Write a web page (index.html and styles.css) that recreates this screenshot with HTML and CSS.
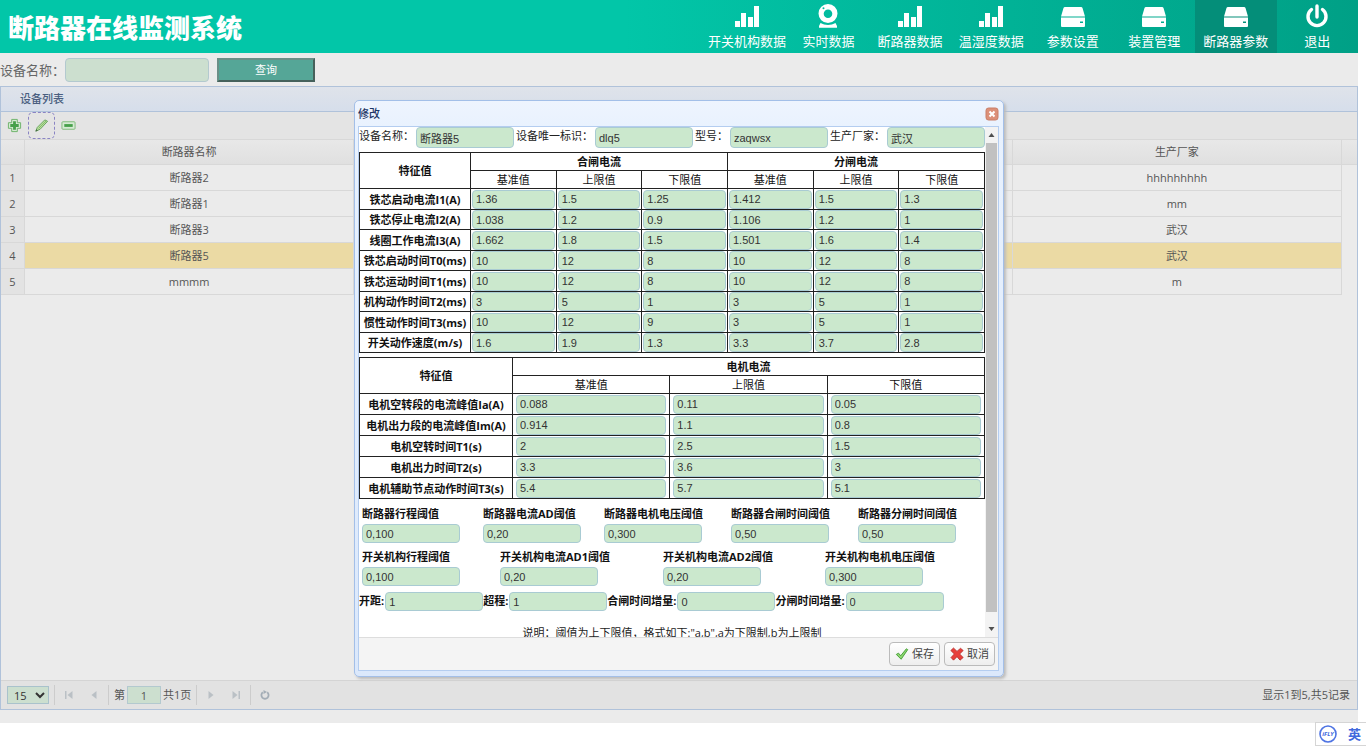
FILE: index.html
```html
<!DOCTYPE html>
<html lang="zh-CN">
<head>
<meta charset="utf-8">
<title>断路器在线监测系统</title>
<link rel="stylesheet" href="styles.css">
</head>
<body>
<svg class="defs" aria-hidden="true">
  <symbol id="bars" viewBox="0 0 26 24"><path d="M1 17h5v6H1zM7 9h5v14H7zM14 13h5v10h-5zM20 2h5v21h-5z"/></symbol>
  <symbol id="cam" viewBox="0 0 26 24"><path fill-rule="evenodd" d="M13 0a9.500 9.500 0 0 1 9.500 9.500 9.500 9.500 0 0 1-19 0A9.500 9.500 0 0 1 13 0zM13 5.500a4.300 4.300 0 1 0 0 8.600A4.300 4.300 0 0 0 13 5.500zM8.500 3.200a1 1 0 1 0 0 2 1 1 0 0 0 0-2zM5.500 19c4.500 2.500 10.500 2.500 15 0l1.500 3v1.800H4V22z"/></symbol>
  <symbol id="disk" viewBox="0 0 26 24"><path fill-rule="evenodd" d="M5 3h16q1.200 0 1.500 1L25 12.500H1L3.500 4Q3.800 3 5 3zM1 13.500h24V22q0 1-1 1H2q-1 0-1-1zM20 17.500V19h3v-1.500z"/></symbol>
  <symbol id="power" viewBox="0 0 26 24"><path d="M7.500 5.500a9 9 0 1 0 11 0M13 2v11" fill="none" stroke="currentColor" stroke-width="3.400" stroke-linecap="round"/></symbol>
</svg>

<div class="app">
  <header class="top">
    <h1>断路器在线监测系统</h1>
    <nav class="nav">
      <a href="#"><svg><use href="#bars"/></svg>开关机构数据</a>
      <a href="#"><svg><use href="#cam"/></svg>实时数据</a>
      <a href="#"><svg><use href="#bars"/></svg>断路器数据</a>
      <a href="#"><svg><use href="#bars"/></svg>温湿度数据</a>
      <a href="#"><svg><use href="#disk"/></svg>参数设置</a>
      <a href="#"><svg><use href="#disk"/></svg>装置管理</a>
      <a href="#" class="on"><svg><use href="#disk"/></svg>断路器参数</a>
      <a href="#"><svg><use href="#power"/></svg>退出</a>
    </nav>
  </header>

  <form class="search">
    <label for="q">设备名称：</label>
    <input id="q" type="text">
    <button type="button">查询</button>
  </form>

  <section class="panel">
    <h2>设备列表</h2>
    <div class="tools">
      <button type="button" aria-label="添加"><svg viewBox="0 0 16 16"><path d="M5 1.500h6V5h3.500v6H11v3.500H5V11H1.500V5H5z" fill="#d5ead3" stroke="#6bb167" stroke-linejoin="round"/><path d="M6.500 3.500h3v3h3v3h-3v3h-3v-3h-3v-3h3z" fill="#46a04a"/></svg></button>
      <button type="button" aria-label="修改" class="focus"><svg viewBox="0 0 16 16"><path d="M2 14l1.500-4L11.500 2 14.500 3.500 6.500 12z" fill="#b9dc9c" stroke="#62a35a" stroke-linejoin="round"/><path d="M5 11l8-8" stroke="#7dbb69"/><path d="M1.500 14.500l1-2.500 1.700 1.500z" fill="#486b44"/></svg></button>
      <button type="button" aria-label="删除"><svg viewBox="0 0 16 16"><rect x="1" y="4" width="14" height="8" rx="1" fill="#d5ead3" stroke="#7dba79"/><path d="M3.500 6.500h9v3h-9z" fill="#46a04a"/></svg></button>
    </div>
    <div class="gridwrap">
      <table class="grid">
        <colgroup><col class="no"><col><col><col><col><col class="gap"></colgroup>
        <thead><tr><th></th><th>断路器名称</th><th></th><th></th><th>生产厂家</th><th></th></tr></thead>
        <tbody>
          <tr><td>1</td><td>断路器2</td><td></td><td></td><td>hhhhhhhhh</td><td></td></tr>
          <tr><td>2</td><td>断路器1</td><td></td><td></td><td>mm</td><td></td></tr>
          <tr><td>3</td><td>断路器3</td><td></td><td></td><td>武汉</td><td></td></tr>
          <tr class="sel"><td>4</td><td>断路器5</td><td></td><td></td><td>武汉</td><td></td></tr>
          <tr><td>5</td><td>mmmm</td><td></td><td></td><td>m</td><td></td></tr>
        </tbody>
      </table>
    </div>
    <div class="pager">
      <select aria-label="每页条数"><option>15</option></select>
      <i></i>
      <button type="button" aria-label="首页"><svg viewBox="0 0 12 12"><path d="M2 2h1.500v8H2zM9.500 2v8L4.500 6z"/></svg></button>
      <button type="button" aria-label="上一页"><svg viewBox="0 0 12 12"><path d="M8.500 2v8L3.500 6z"/></svg></button>
      <i></i>
      <label for="pg">第</label><input id="pg" type="text" value="1"><span>共1页</span>
      <i></i>
      <button type="button" aria-label="下一页"><svg viewBox="0 0 12 12"><path d="M3.500 2v8l5-4z"/></svg></button>
      <button type="button" aria-label="末页"><svg viewBox="0 0 12 12"><path d="M2.500 2v8l5-4zM8.500 2H10v8H8.500z"/></svg></button>
      <i></i>
      <button type="button" aria-label="刷新"><svg viewBox="0 0 12 12"><path d="M3.800 3.300a3.600 3.600 0 1 0 4.400 0" fill="none" stroke="#a3adb6" stroke-width="1.800"/><path d="M4.500 1L8 3 4.500 5z" fill="#a3adb6"/></svg></button>
      <span class="info">显示1到5,共5记录</span>
    </div>
  </section>

  <div class="dialog" role="dialog" aria-labelledby="dt">
    <div class="dhead">
      <h2 id="dt">修改</h2>
      <button type="button" aria-label="关闭"><svg viewBox="0 0 14 14"><rect x="1" y="1" width="12" height="12" rx="2.500" fill="#dc9079" stroke="#c97f69"/><path d="M4.500 4.500l5 5m0-5l-5 5" stroke="#fff" stroke-width="2"/></svg></button>
    </div>
    <div class="dmain">
      <div class="dscroll">
        <div class="dbody">
          <div class="base">
            <label for="b1">设备名称：</label><input id="b1" value="断路器5">
            <label for="b2">设备唯一标识：</label><input id="b2" value="dlq5">
            <label for="b3">型号：</label><input id="b3" value="zaqwsx">
            <label for="b4">生产厂家：</label><input id="b4" value="武汉">
          </div>

          <table class="vals six">
            <colgroup><col class="name"><col><col><col><col><col><col></colgroup>
            <thead>
              <tr><th rowspan="2">特征值</th><th colspan="3">合闸电流</th><th colspan="3">分闸电流</th></tr>
              <tr><td>基准值</td><td>上限值</td><td>下限值</td><td>基准值</td><td>上限值</td><td>下限值</td></tr>
            </thead>
            <tbody>
              <tr><th>铁芯启动电流I1(A)</th><td><input aria-label="I1合闸基准值" value="1.36"></td><td><input aria-label="I1合闸上限值" value="1.5"></td><td><input aria-label="I1合闸下限值" value="1.25"></td><td><input aria-label="I1分闸基准值" value="1.412"></td><td><input aria-label="I1分闸上限值" value="1.5"></td><td><input aria-label="I1分闸下限值" value="1.3"></td></tr>
              <tr><th>铁芯停止电流I2(A)</th><td><input aria-label="I2合闸基准值" value="1.038"></td><td><input aria-label="I2合闸上限值" value="1.2"></td><td><input aria-label="I2合闸下限值" value="0.9"></td><td><input aria-label="I2分闸基准值" value="1.106"></td><td><input aria-label="I2分闸上限值" value="1.2"></td><td><input aria-label="I2分闸下限值" value="1"></td></tr>
              <tr><th>线圈工作电流I3(A)</th><td><input aria-label="I3合闸基准值" value="1.662"></td><td><input aria-label="I3合闸上限值" value="1.8"></td><td><input aria-label="I3合闸下限值" value="1.5"></td><td><input aria-label="I3分闸基准值" value="1.501"></td><td><input aria-label="I3分闸上限值" value="1.6"></td><td><input aria-label="I3分闸下限值" value="1.4"></td></tr>
              <tr><th>铁芯启动时间T0(ms)</th><td><input aria-label="T0合闸基准值" value="10"></td><td><input aria-label="T0合闸上限值" value="12"></td><td><input aria-label="T0合闸下限值" value="8"></td><td><input aria-label="T0分闸基准值" value="10"></td><td><input aria-label="T0分闸上限值" value="12"></td><td><input aria-label="T0分闸下限值" value="8"></td></tr>
              <tr><th>铁芯运动时间T1(ms)</th><td><input aria-label="T1合闸基准值" value="10"></td><td><input aria-label="T1合闸上限值" value="12"></td><td><input aria-label="T1合闸下限值" value="8"></td><td><input aria-label="T1分闸基准值" value="10"></td><td><input aria-label="T1分闸上限值" value="12"></td><td><input aria-label="T1分闸下限值" value="8"></td></tr>
              <tr><th>机构动作时间T2(ms)</th><td><input aria-label="T2合闸基准值" value="3"></td><td><input aria-label="T2合闸上限值" value="5"></td><td><input aria-label="T2合闸下限值" value="1"></td><td><input aria-label="T2分闸基准值" value="3"></td><td><input aria-label="T2分闸上限值" value="5"></td><td><input aria-label="T2分闸下限值" value="1"></td></tr>
              <tr><th>惯性动作时间T3(ms)</th><td><input aria-label="T3合闸基准值" value="10"></td><td><input aria-label="T3合闸上限值" value="12"></td><td><input aria-label="T3合闸下限值" value="9"></td><td><input aria-label="T3分闸基准值" value="3"></td><td><input aria-label="T3分闸上限值" value="5"></td><td><input aria-label="T3分闸下限值" value="1"></td></tr>
              <tr><th>开关动作速度(m/s)</th><td><input aria-label="速度合闸基准值" value="1.6"></td><td><input aria-label="速度合闸上限值" value="1.9"></td><td><input aria-label="速度合闸下限值" value="1.3"></td><td><input aria-label="速度分闸基准值" value="3.3"></td><td><input aria-label="速度分闸上限值" value="3.7"></td><td><input aria-label="速度分闸下限值" value="2.8"></td></tr>
            </tbody>
          </table>

          <table class="vals three">
            <colgroup><col class="name"><col><col><col></colgroup>
            <thead>
              <tr><th rowspan="2">特征值</th><th colspan="3">电机电流</th></tr>
              <tr><td>基准值</td><td>上限值</td><td>下限值</td></tr>
            </thead>
            <tbody>
              <tr><th>电机空转段的电流峰值Ia(A)</th><td><input aria-label="Ia基准值" value="0.088"></td><td><input aria-label="Ia上限值" value="0.11"></td><td><input aria-label="Ia下限值" value="0.05"></td></tr>
              <tr><th>电机出力段的电流峰值Im(A)</th><td><input aria-label="Im基准值" value="0.914"></td><td><input aria-label="Im上限值" value="1.1"></td><td><input aria-label="Im下限值" value="0.8"></td></tr>
              <tr><th>电机空转时间T1(s)</th><td><input aria-label="电机T1基准值" value="2"></td><td><input aria-label="电机T1上限值" value="2.5"></td><td><input aria-label="电机T1下限值" value="1.5"></td></tr>
              <tr><th>电机出力时间T2(s)</th><td><input aria-label="电机T2基准值" value="3.3"></td><td><input aria-label="电机T2上限值" value="3.6"></td><td><input aria-label="电机T2下限值" value="3"></td></tr>
              <tr><th>电机辅助节点动作时间T3(s)</th><td><input aria-label="电机T3基准值" value="5.4"></td><td><input aria-label="电机T3上限值" value="5.7"></td><td><input aria-label="电机T3下限值" value="5.1"></td></tr>
            </tbody>
          </table>

          <div class="limits five">
            <label>断路器行程阈值<input value="0,100"></label>
            <label>断路器电流AD阈值<input value="0,20"></label>
            <label>断路器电机电压阈值<input value="0,300"></label>
            <label>断路器合闸时间阈值<input value="0,50"></label>
            <label>断路器分闸时间阈值<input value="0,50"></label>
          </div>
          <div class="limits four">
            <label>开关机构行程阈值<input value="0,100"></label>
            <label>开关机构电流AD1阈值<input value="0,20"></label>
            <label>开关机构电流AD2阈值<input value="0,20"></label>
            <label>开关机构电机电压阈值<input value="0,300"></label>
          </div>
          <div class="extra">
            <label for="e1">开距:</label><input id="e1" value="1">
            <label for="e2">超程:</label><input id="e2" value="1">
            <label for="e3">合闸时间增量:</label><input id="e3" value="0">
            <label for="e4">分闸时间增量:</label><input id="e4" value="0">
          </div>
          <p class="note">说明：阈值为上下限值，格式如下:"a,b",a为下限制,b为上限制</p>
        </div>
        <div class="bar" aria-hidden="true">
          <svg viewBox="0 0 13 16"><path d="M3.500 10h6l-3-4z"/></svg>
          <div class="thumb"></div>
          <svg viewBox="0 0 13 16"><path d="M3.500 6h6l-3 4z"/></svg>
        </div>
      </div>
      <div class="dfoot">
        <button type="button"><svg viewBox="0 0 16 16"><path d="M1.500 8.500L4 7l2.500 3L13 2l1.500 1L7 14z" fill="#8fd673" stroke="#3a9a2c" stroke-linejoin="round"/></svg>保存</button>
        <button type="button"><svg viewBox="0 0 16 16"><path d="M1 4l3-2.800L8 5l4-3.500L15 4l-4 4 4 4-3.500 3L8 11l-4 4-2.800-3L5 8z" fill="#e8403c" stroke="#b8312f" stroke-linejoin="round"/></svg>取消</button>
      </div>
    </div>
  </div>
</div>

<div class="ime">
  <svg viewBox="0 0 20 20"><circle cx="10" cy="10" r="8" fill="#fff" stroke="#4f74e3" stroke-width="1.600"/><text x="10" y="12" text-anchor="middle">iFLY</text></svg>
  <span>英</span>
</div>
</body>
</html>
```
FILE: styles.css
```css
* { box-sizing: border-box; }
body {
  margin: 0;
  height: 100vh;
  overflow: hidden;
  background: #fff;
  color: #555;
  font: 11px/16px "Open Sans", "Noto Sans CJK SC", sans-serif;
}
h1, h2, p { margin: 0; }
button, input, select { font: inherit; color: inherit; margin: 0; }
svg { display: block; flex: none; }
.defs { position: absolute; width: 0; height: 0; }

.app {
  position: relative;
  display: flex;
  flex-direction: column;
  height: calc(100vh - 23px);
  margin-right: 8px;
  background: #ebebeb;
}

/* header */
.top {
  display: flex;
  justify-content: space-between;
  height: 53px;
  background: linear-gradient(90deg, #02c6a8 46%, #00a086);
  color: #fff;
}
h1 {
  padding-left: 8px;
  font: 900 26px/53px "Noto Sans CJK SC", sans-serif;
  white-space: nowrap;
}
.nav { display: flex; flex: 0 0 48%; }
.nav a {
  flex: 1 1 0;
  display: flex;
  flex-direction: column;
  align-items: center;
  padding-top: 4px;
  gap: 3px;
  color: #fff;
  font-size: 13px;
  line-height: 20px;
  text-decoration: none;
  white-space: nowrap;
}
.nav a.on { background: #048e79; }
.nav svg { width: 26px; height: 24px; fill: currentColor; }

/* search */
.search {
  display: flex;
  align-items: center;
  height: 33px;
}
.search label { width: 65px; font-size: 13px; white-space: nowrap; color: #666; }
.search input {
  width: 144px;
  height: 24px;
  border: 1px solid #b3c9cf;
  border-radius: 4px;
  background: #ccdfcf;
}
.search button {
  width: 98px;
  height: 24px;
  margin-left: 8px;
  padding: 0;
  border: 2px solid;
  border-color: #6b8f87 #46615b #46615b #6b8f87;
  background: #55a697;
  color: #fff;
}

/* list panel */
.panel {
  flex: 1;
  display: flex;
  flex-direction: column;
  margin-bottom: 13px;
  border: 1px solid #b0c2da;
}
.panel > h2 {
  height: 25px;
  padding-left: 19px;
  border-bottom: 1px solid #b0c2da;
  background: linear-gradient(#dfe3ea, #d6deeb);
  color: #4a5e80;
  font-size: 11px;
  font-weight: 500;
  line-height: 24px;
}
.tools {
  display: flex;
  align-items: center;
  height: 27px;
  background: #e4e4e4;
}
.tools button {
  display: grid;
  place-items: center;
  width: 27px;
  height: 27px;
  padding: 0;
  border: 0;
  background: none;
}
.tools .focus { border: 1px dashed #8a84c4; border-radius: 5px; }
.tools svg { width: 15px; height: 15px; }
.gridwrap { flex: 1; }
.grid {
  width: 100%;
  table-layout: fixed;
  border-collapse: separate;
  border-spacing: 0;
}
.grid .no { width: 24px; }
.grid .gap { width: 15px; }
.grid th, .grid td {
  height: 26px;
  padding: 0;
  border: 0 solid #d8d8d8;
  border-width: 0 1px 1px 0;
  font-weight: 400;
  text-align: center;
}
.grid th { border-top-width: 1px; background: linear-gradient(#e8e8e8, #e0e0e0); }
.grid td:first-child { background: #e3e3e3; }
.grid td:last-child, .grid th:last-child { border-right: 0; }
.grid td:last-child { border: 0; }
.grid .sel td { background: #ebdaa4; }
.grid .sel td:first-child { background: #e3e3e3; }
.grid .sel td:last-child { background: none; }

.pager {
  display: flex;
  align-items: center;
  height: 29px;
  padding: 0 7px 0 6px;
  border-top: 1px solid #d4d4d4;
  background: #e2e2e2;
}
.pager select {
  width: 42px;
  height: 18px;
  padding: 0 2px;
  border: 1px solid #a9c2cc;
  background: #ccdfcf;
  color: #333;
}
.pager i { width: 1px; height: 20px; margin: 0 5px; background: #ccc; }
.pager button {
  display: grid;
  place-items: center;
  width: 18px;
  height: 20px;
  padding: 0;
  border: 0;
  background: none;
}
.pager button + button { margin-left: 7px; }
.pager button svg { width: 12px; height: 12px; fill: #bac0c5; }
.pager input {
  width: 34px;
  height: 18px;
  margin: 0 2px;
  border: 1px solid #b3c9cf;
  background: #ccdfcf;
  text-align: center;
}
.pager .info { margin-left: auto; }

/* dialog */
.dialog {
  position: absolute;
  top: 100px;
  left: 0;
  right: 0;
  width: 650px;
  margin: 0 auto;
  padding: 0 4px 5px 3px;
  border: 1px solid #a3bfe8;
  border-radius: 5px;
  background: linear-gradient(#eef4fe, #e9f2fe 25px, #dbe8fb);
  box-shadow: 2px 2px 3px #bbb;
  color: #222;
}
.dhead {
  display: flex;
  align-items: center;
  justify-content: space-between;
  height: 25px;
}
.dhead h2 { font-size: 11px; font-weight: 500; color: #1c3565; }
.dhead button { padding: 0; border: 0; background: none; }
.dhead svg { width: 14px; height: 14px; }
.dmain { border: 1px solid #b4cdf0; background: #fff; }
.dscroll { display: flex; height: 510px; }
.dbody { flex: 1; min-width: 0; overflow: hidden; }
.dialog input {
  height: 19px;
  min-width: 0;
  padding: 0 3px;
  border: 1px solid #a9cbd3;
  border-radius: 4px;
  background: #cbe8cd;
  font-family: "Liberation Sans", "Noto Sans CJK SC", sans-serif;
  color: #333;
}
.base {
  display: flex;
  gap: 2px;
  white-space: nowrap;
}
.base label { line-height: 18px; }
.base input { flex: 1 1 97px; height: 21px; }
.bar {
  display: flex;
  flex-direction: column;
  flex: 0 0 13px;
  background: #f3f3f3;
}
.bar svg { width: 13px; height: 16px; fill: #505050; }
.thumb { height: 469px; margin: 0 1px; background: #c1c1c1; }
.bar svg:last-child { margin-top: auto; }

.vals {
  width: 100%;
  table-layout: fixed;
  border-collapse: collapse;
  margin-top: 4px;
}
.vals.six .name { width: 111px; }
.vals.three .name { width: 153px; }
.vals th, .vals td {
  padding: 0;
  border: 1px solid #222;
  line-height: 17px;
  text-align: center;
  color: #111;
  white-space: nowrap;
}
.vals th { font-weight: 700; }
.vals tbody tr { height: 21px; }
.vals.six tbody tr:nth-child(even) { height: 20px; }
.vals input { display: block; width: calc(100% - 2px); margin: 0 1px; }
.vals.three input { width: calc(100% - 6px); margin: 0 3px; }

.limits { display: grid; padding-left: 3px; }
.limits.five { grid-template-columns: 121px 121px 127px 127px 1fr; margin-top: 5px; }
.limits.four { grid-template-columns: 138px 163px 162px 1fr; margin-top: 4px; }
.limits label { display: flex; flex-direction: column; line-height: 20px; font-weight: 700; color: #111; white-space: nowrap; }
.limits input, .extra input { width: 98px; font-weight: 400; }
.extra { display: flex; margin-top: 6px; white-space: nowrap; }
.extra label { padding-right: 1px; line-height: 18px; font-weight: 700; color: #111; }
.note { margin-top: 13px; text-align: center; line-height: 18px; }
.dfoot {
  display: flex;
  justify-content: flex-end;
  align-items: center;
  gap: 4px;
  height: 33px;
  padding-right: 3px;
  border-top: 1px solid #ddd;
  background: #f4f4f4;
}
.dfoot button {
  display: flex;
  align-items: center;
  justify-content: center;
  gap: 3px;
  width: 51px;
  height: 24px;
  padding: 0;
  border: 1px solid #bbb;
  border-radius: 4px;
  background: linear-gradient(#fff, #eee);
  color: #444;
}
.dfoot svg { width: 14px; height: 14px; }

/* input-method bar */
.ime {
  position: fixed;
  right: 0;
  bottom: 0;
  display: flex;
  align-items: center;
  justify-content: space-between;
  width: 51px;
  height: 24px;
  padding: 0 5px 0 2px;
  border: 1px solid #d5d5d5;
  border-right: 0;
  background: #fff;
  color: #4169dd;
  font-size: 13px;
  font-weight: 700;
}
.ime svg { width: 20px; height: 20px; }
.ime text { font: italic 700 6px "Open Sans", sans-serif; fill: #4169dd; }
```
